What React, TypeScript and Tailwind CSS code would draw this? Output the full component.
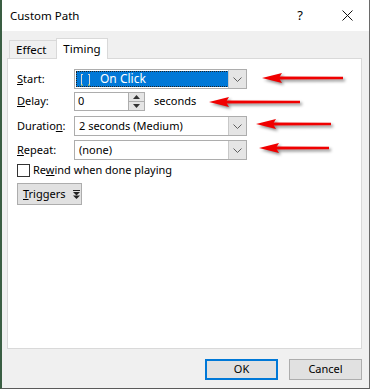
import React from "react";

const font = { fontFamily: '"Segoe UI", "Noto Sans", "Liberation Sans", sans-serif' };

function Chevron() {
  return (
    <svg width="9" height="5" viewBox="0 0 9 5">
      <path d="M0.5 0.5 L4.5 4.5 L8.5 0.5" fill="none" stroke="#5f5f5f" strokeWidth="1" />
    </svg>
  );
}

function Combo({ children, focused }: { children: React.ReactNode; focused?: boolean }) {
  return (
    <div className="relative w-[173px] h-[20px] border border-[#adadad] bg-white flex items-center">
      {focused ? (
        <div className="ml-[1px] h-[16px] w-[153px] bg-[#0078d7] border border-dotted border-[#222] flex items-center text-white">
          {children}
        </div>
      ) : (
        <div className="pl-[4px] text-black">{children}</div>
      )}
      <div className="absolute right-0 top-0 bottom-0 w-[18px] bg-[#e5e5e5] border-l border-[#c8c8c8] flex items-center justify-center">
        <Chevron />
      </div>
    </div>
  );
}

function Arrow({ tip, tail, y }: { tip: number; tail: number; y: number }) {
  const w = tail - tip + 6;
  return (
    <svg
      className="absolute drop-shadow-[2px_2px_1.5px_rgba(0,0,0,0.45)]"
      style={{ left: tip - 2, top: y - 8 }}
      width={w}
      height={16}
      viewBox={`0 0 ${w} 16`}
    >
      <polygon points={`2,8 22,3 19,8 22,13`} fill="#f00000" />
      <polygon points={`18,6.5 ${w - 4},6.8 ${w - 4},9.2 18,9.5`} fill="#f00000" />
    </svg>
  );
}

export default function App() {
  return (
    <div
      className="relative w-[370px] h-[389px] bg-[#f0f0f0] border-l-2 border-l-[#3a5e43] border-r border-r-[#6a6a6a] border-b border-b-[#5a5a5a] flex flex-col text-[11px] text-black overflow-hidden"
      style={font}
    >
      {/* Title bar */}
      <div className="h-[31px] bg-white flex items-center shrink-0">
        <div className="pl-[8px] text-[11.5px] leading-none">Custom Path</div>
        <div className="ml-auto mr-[39px] text-[13px] leading-none">?</div>
        <svg className="mr-[16px]" width="11" height="11" viewBox="0 0 11 11">
          <path d="M0.5 0.5 L10.5 10.5 M10.5 0.5 L0.5 10.5" stroke="#111" strokeWidth="1" />
        </svg>
      </div>

      {/* Tabs */}
      <div className="mt-[7px] ml-[7px] h-[20px] flex items-end shrink-0">
        <div className="h-[18px] w-[47px] border border-b-0 border-r-0 border-[#d9d9d9] bg-[#f0f0f0] flex items-center pl-[6px] leading-none text-[11.5px]">
          Effect
        </div>
        <div className="relative z-10 -mb-px h-[21px] w-[52px] border border-b-0 border-[#d9d9d9] bg-white flex items-start pt-[4px] justify-center leading-none text-[11.5px]">
          Timing
        </div>
      </div>

      {/* Panel */}
      <div className="ml-[5px] w-[355px] h-[291px] border border-[#d9d9d9] bg-white shrink-0 pl-[9px] pt-[10px] flex flex-col">
        <div className="flex items-center h-[20px]">
          <div className="w-[57px]">
            <span className="underline">S</span>tart:
          </div>
          <Combo focused>
            <svg className="ml-[3px] mr-[9px]" width="11" height="13" viewBox="0 0 11 13">
              <path d="M1.5 1 V12 M9.5 1 V12 M1.5 1.5 H3 M8 1.5 H9.5" stroke="#d8d8d8" strokeWidth="1" fill="none" />
              <path d="M1 12 H3 M8 12 H10" stroke="#c8d24a" strokeWidth="1" />
            </svg>
            <span className="text-[12px]">On Click</span>
          </Combo>
        </div>

        <div className="flex items-center h-[19px] mt-[3px]">
          <div className="w-[57px]">
            <span className="underline">D</span>elay:
          </div>
          <div className="w-[71px] h-[19px] border border-[#adadad] bg-white flex items-center">
            <div className="pl-[3px] flex-1">0</div>
            <div className="w-[16px] h-full flex flex-col border-l border-[#adadad]">
              <div className="flex-1 bg-[#e5e5e5] border-b border-[#adadad] flex items-center justify-center">
                <svg width="7" height="4" viewBox="0 0 7 4">
                  <polygon points="0,4 3.5,0 7,4" fill="#333" />
                </svg>
              </div>
              <div className="flex-1 bg-[#e5e5e5] flex items-center justify-center">
                <svg width="7" height="4" viewBox="0 0 7 4">
                  <polygon points="0,0 3.5,4 7,0" fill="#333" />
                </svg>
              </div>
            </div>
          </div>
          <div className="ml-[9px]">seconds</div>
        </div>

        <div className="flex items-center h-[20px] mt-[5px]">
          <div className="w-[57px]">
            Duratio<span className="underline">n</span>:
          </div>
          <Combo>2 seconds (Medium)</Combo>
        </div>

        <div className="flex items-center h-[20px] mt-[4px]">
          <div className="w-[57px]">
            <span className="underline">R</span>epeat:
          </div>
          <Combo>(none)</Combo>
        </div>

        <div className="flex items-center h-[13px] mt-[4px]">
          <div className="w-[13px] h-[13px] border border-[#333] bg-white" />
          <div className="ml-[3px]">
            Re<span className="underline">w</span>ind when done playing
          </div>
        </div>

        <div className="mt-[6px] w-[65px] h-[22px] border border-[#adadad] bg-[#e1e1e1] flex items-center pl-[5px]">
          <span>
            <span className="underline">T</span>riggers
          </span>
          <svg className="ml-[7px]" width="7" height="9" viewBox="0 0 7 9">
            <rect x="0" y="0" width="7" height="1" fill="#222" />
            <polygon points="0,2 7,2 3.5,5.5" fill="#222" />
            <polygon points="0,5.5 7,5.5 3.5,9" fill="#222" />
          </svg>
        </div>
      </div>

      {/* Buttons */}
      <div className="mt-[10px] flex justify-end gap-[11px] pr-[7px]">
        <div className="w-[73px] h-[21px] border-2 border-[#0078d7] bg-[#e1e1e1] flex items-center justify-center">
          OK
        </div>
        <div className="w-[73px] h-[21px] border border-[#adadad] bg-[#e1e1e1] flex items-center justify-center">
          Cancel
        </div>
      </div>

      {/* Annotations */}
      <Arrow tip={260} tail={341} y={78} />
      <Arrow tip={207} tail={298} y={102} />
      <Arrow tip={254} tail={329} y={124} />
      <Arrow tip={257} tail={327} y={148} />
    </div>
  );
}
